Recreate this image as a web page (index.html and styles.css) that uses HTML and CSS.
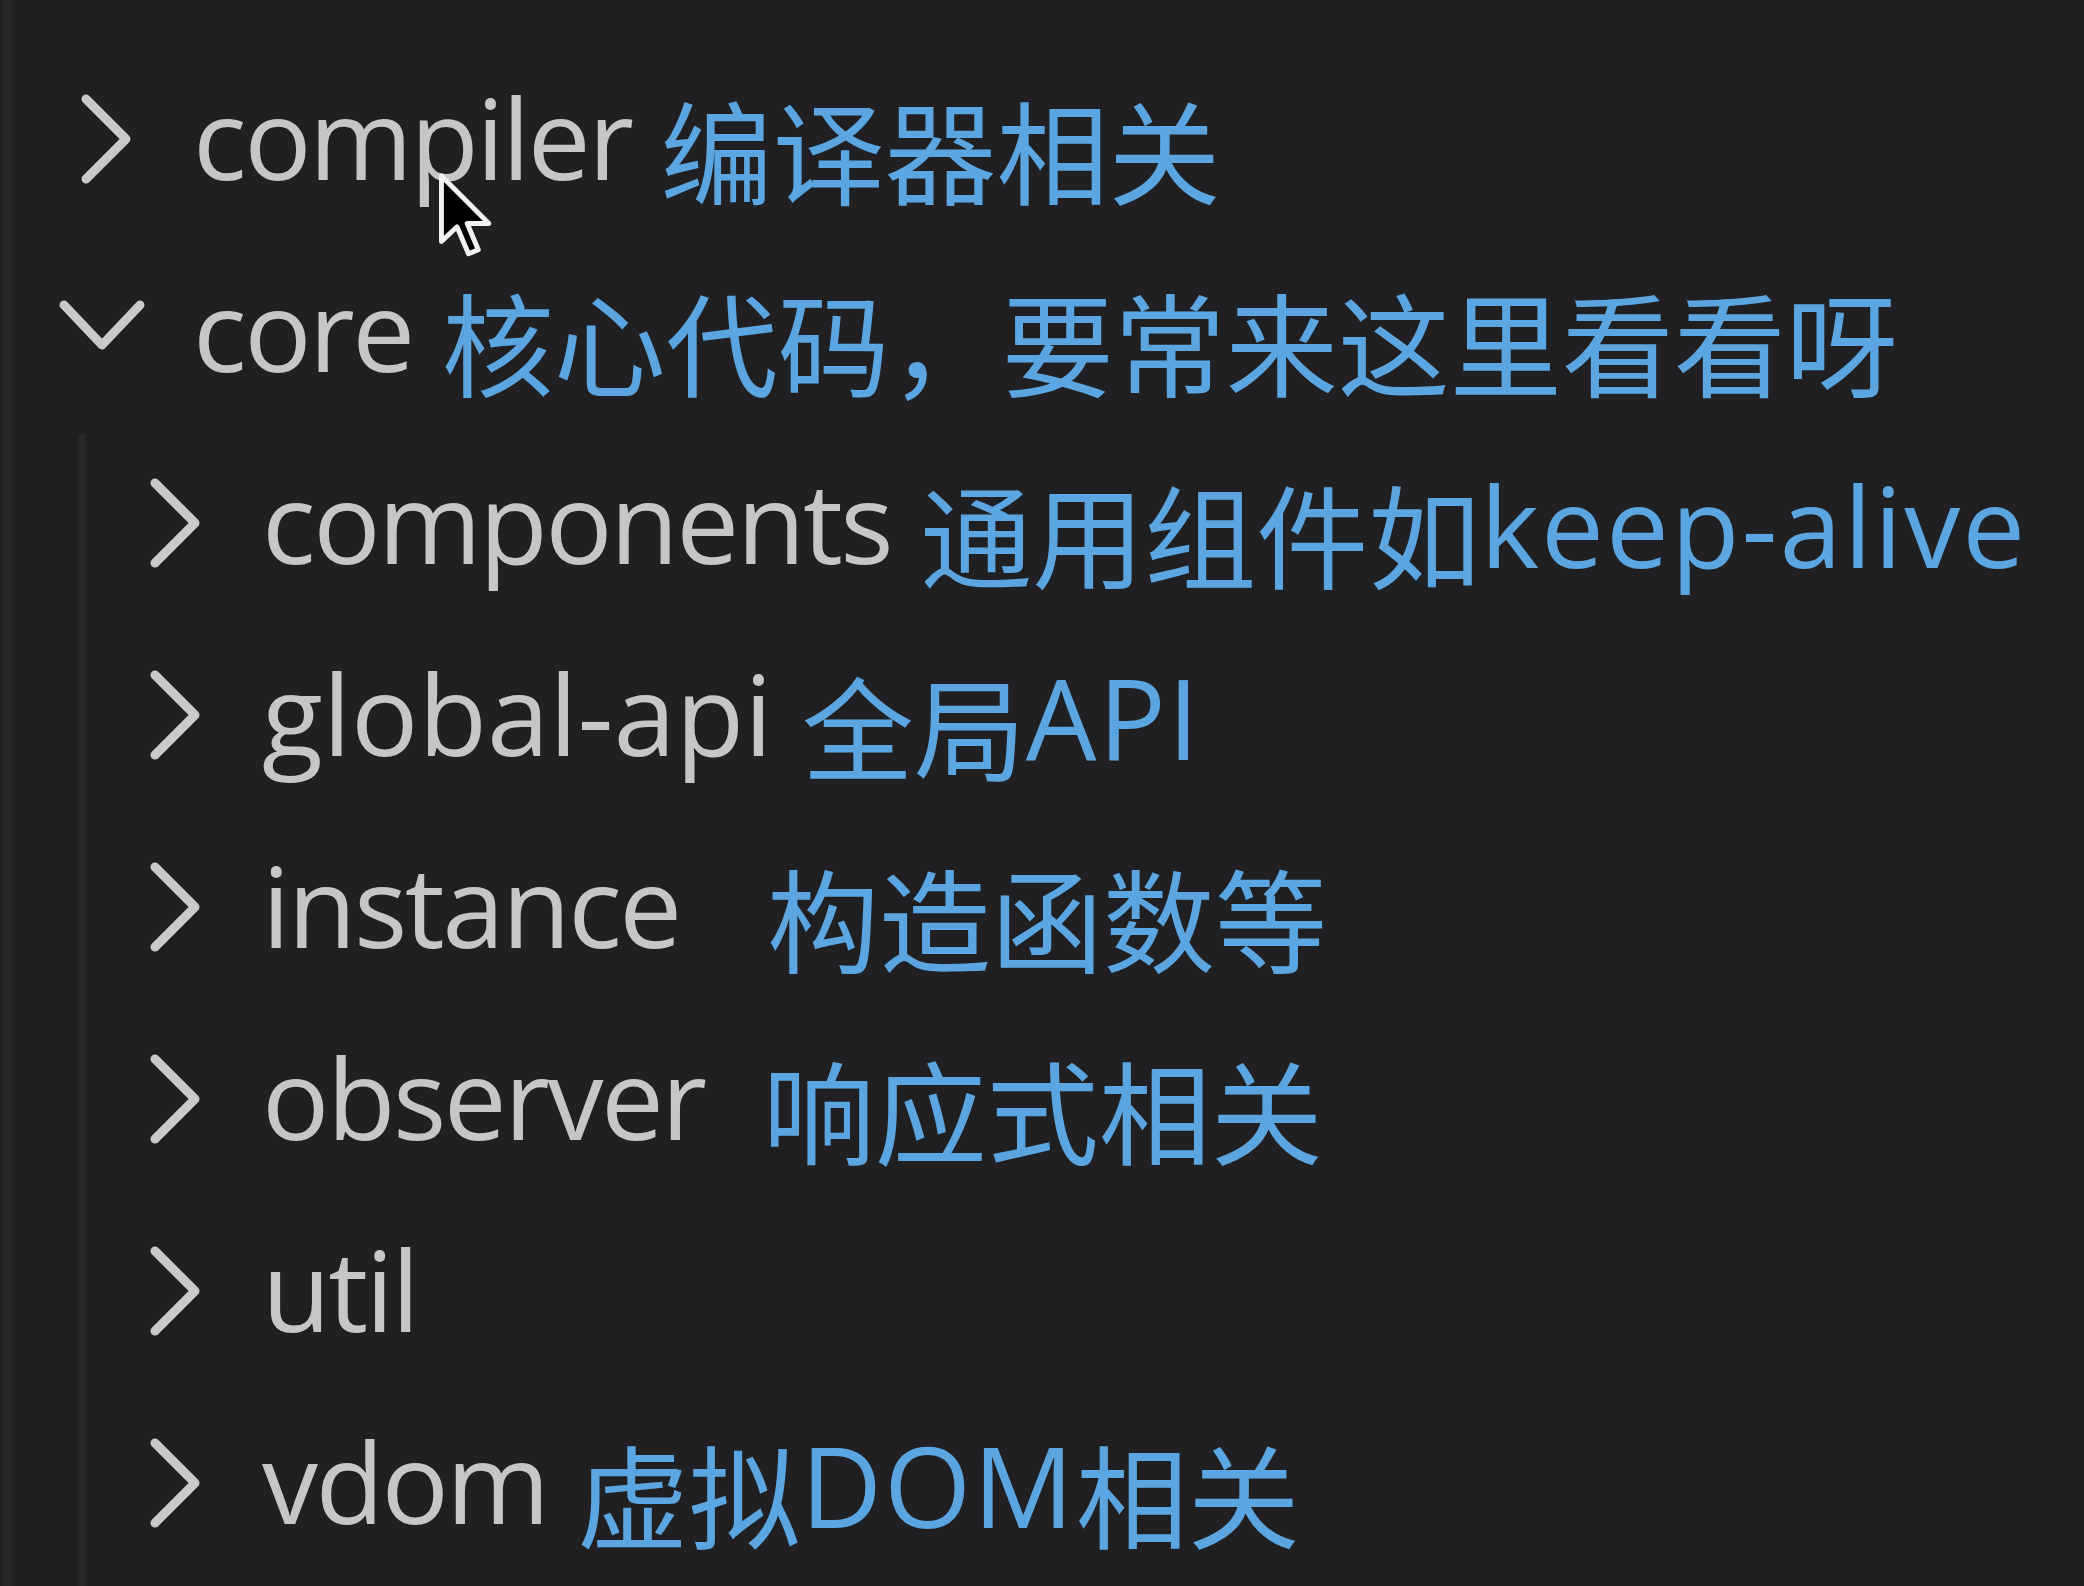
FILE: index.html
```html
<!DOCTYPE html>
<html lang="zh-CN">
<head>
<meta charset="utf-8">
<title>Explorer</title>
<link rel="stylesheet" href="styles.css">
</head>
<body>
<div class="panel">
  <div class="tree">
    <div class="row lvl1">
      <svg class="twist" viewBox="0 0 100 100"><polyline points="31,10 71,50 31,90"/></svg>
      <span class="label"><span class="name">compiler</span> <span class="note"><span class="cjk">编译器相关</span></span></span>
    </div>
    <div class="row lvl1">
      <svg class="twist open" viewBox="0 0 100 100"><polyline points="9,24 47,64 85,24"/></svg>
      <span class="label"><span class="name">core</span> <span class="note"><span class="cjk">核心代码，要常来这里看看呀</span></span></span>
    </div>
    <div class="children">
      <div class="row lvl2">
        <svg class="twist" viewBox="0 0 100 100"><polyline points="31,10 71,50 31,90"/></svg>
        <span class="label"><span class="name">components</span> <span class="note"><span class="cjk">通用组件如</span><span class="en">keep-alive</span></span></span>
      </div>
      <div class="row lvl2">
        <svg class="twist" viewBox="0 0 100 100"><polyline points="31,10 71,50 31,90"/></svg>
        <span class="label"><span class="name loose">global-api</span> <span class="note"><span class="cjk">全局</span><span class="en">API</span></span></span>
      </div>
      <div class="row lvl2">
        <svg class="twist" viewBox="0 0 100 100"><polyline points="31,10 71,50 31,90"/></svg>
        <span class="label"><span class="name">instance</span>   <span class="note"><span class="cjk">构造函数等</span></span></span>
      </div>
      <div class="row lvl2">
        <svg class="twist" viewBox="0 0 100 100"><polyline points="31,10 71,50 31,90"/></svg>
        <span class="label"><span class="name">observer</span>  <span class="note"><span class="cjk">响应式相关</span></span></span>
      </div>
      <div class="row lvl2">
        <svg class="twist" viewBox="0 0 100 100"><polyline points="31,10 71,50 31,90"/></svg>
        <span class="label"><span class="name">util</span></span>
      </div>
      <div class="row lvl2">
        <svg class="twist" viewBox="0 0 100 100"><polyline points="31,10 71,50 31,90"/></svg>
        <span class="label"><span class="name">vdom</span> <span class="note"><span class="cjk">虚拟</span><span class="en">DOM</span><span class="cjk">相关</span></span></span>
      </div>
    </div>
  </div>
  <svg class="pointer" viewBox="0 0 14 22"><path d="M1 1 L1 17 L4.8 13.4 L7.6 20 L10 19 L7.3 12.6 L12.6 12.6 Z"/></svg>
</div>
</body>
</html>
```

FILE: styles.css
```css
html, body {
  margin: 0;
  padding: 0;
  background: #202022;
  height: 100%;
  overflow: hidden;
}

.panel {
  position: relative;
  margin-left: 3px;
  border-left: 9px solid #262628;
  min-height: 100%;
  padding-top: 50px;
  box-sizing: border-box;
  font-family: "Open Sans", "Noto Sans CJK SC", sans-serif;
  font-size: 112px;
}

.row {
  display: flex;
  align-items: center;
  height: 192px;
  white-space: pre;
}

.lvl1 { padding-left: 43px; }

.children {
  margin-left: 66px;
  border-left: 7px solid #29292b;
  min-height: 1200px;
}

.lvl2 { padding-left: 39px; }

.twist {
  width: 100px;
  height: 100px;
  flex: none;
  margin-bottom: 14px;
  fill: none;
  stroke: #c9c9c9;
  stroke-width: 9;
  stroke-linecap: round;
  stroke-linejoin: round;
}

.label {
  margin-left: 38px;
  margin-bottom: 18px;
  line-height: 192px;
}

.name {
  color: #c6c6c6;
  letter-spacing: -2.5px;
}

.name.loose {
  letter-spacing: 0;
}

.note {
  color: #5ba5e1;
  line-height: 1;
}

.cjk {
  font-family: "Noto Sans CJK SC", sans-serif;
  vertical-align: -17px;
  line-height: 1;
}

.en {
  letter-spacing: 2px;
  vertical-align: -4px;
  line-height: 1;
}

.pointer {
  position: absolute;
  left: 425px;
  top: 172px;
  width: 58px;
  height: 90px;
  fill: #000;
  stroke: #f2f2f2;
  stroke-width: 1.2;
  stroke-linejoin: round;
}
```
